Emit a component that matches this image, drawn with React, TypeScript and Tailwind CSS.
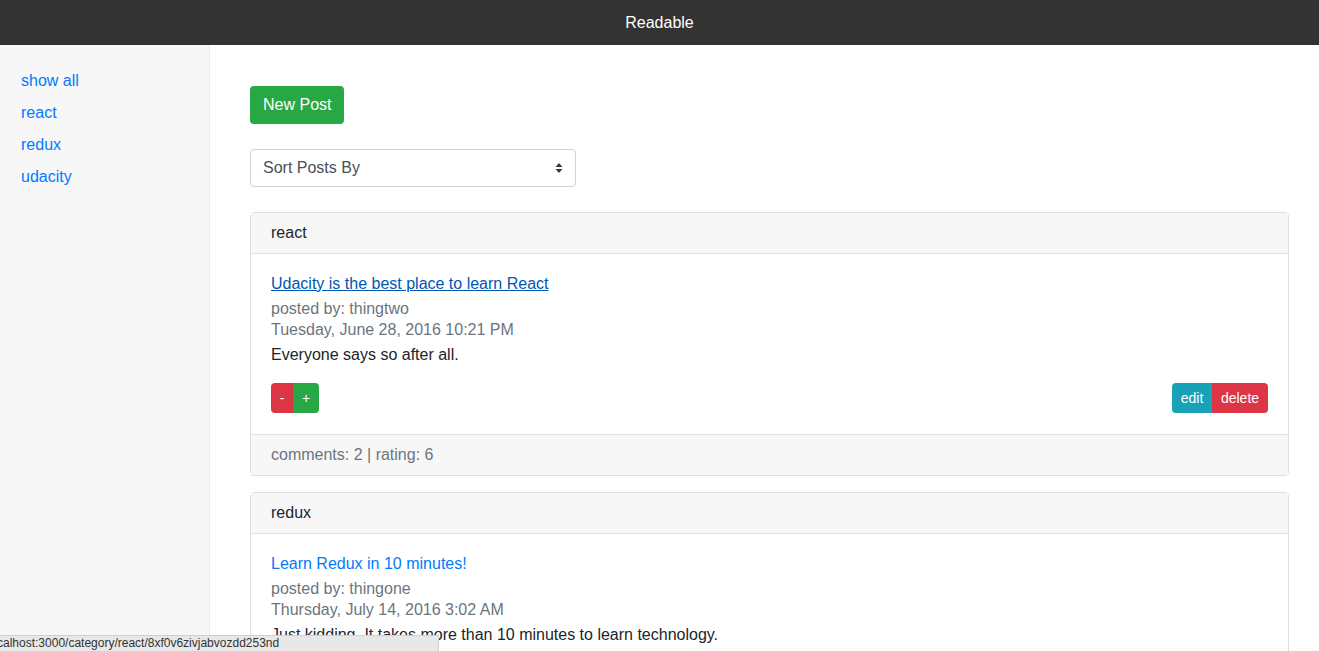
const categories = ['show all', 'react', 'redux', 'udacity']

const posts = [
  {
    category: 'react',
    title: 'Udacity is the best place to learn React',
    author: 'thingtwo',
    date: 'Tuesday, June 28, 2016 10:21 PM',
    body: 'Everyone says so after all.',
    comments: 2,
    rating: 6,
    hovered: true,
  },
  {
    category: 'redux',
    title: 'Learn Redux in 10 minutes!',
    author: 'thingone',
    date: 'Thursday, July 14, 2016 3:02 AM',
    body: 'Just kidding. It takes more than 10 minutes to learn technology.',
    comments: 0,
    rating: -5,
    hovered: false,
  },
]

function PostCard({ post }: { post: (typeof posts)[number] }) {
  return (
    <div className="mb-4 rounded-[4px] border border-[#dfdfdf] bg-white">
      <div className="border-b border-[#dfdfdf] bg-[#f7f7f7] px-5 py-2 leading-6 text-[#212529]">
        {post.category}
      </div>
      <div className="px-5 pt-[19px] pb-[21px]">
        <a
          href="#"
          className={
            post.hovered
              ? 'block leading-[21px] text-[#0056b3] underline mb-1'
              : 'block leading-[21px] text-[#007bff] mb-1'
          }
        >
          {post.title}
        </a>
        <div className="leading-[21px] text-[#6c757d]">posted by: {post.author}</div>
        <div className="leading-[21px] text-[#6c757d]">{post.date}</div>
        <p className="mt-1 leading-[21px] text-[#212529]">{post.body}</p>
        <div className="mt-[18px] flex items-center justify-between">
          <div className="flex">
            <button className="h-[30px] w-[22px] rounded-l-[4px] bg-[#dc3545] text-[14px] text-white">-</button>
            <button className="h-[30px] w-[26px] rounded-r-[4px] bg-[#28a745] text-[14px] text-white">+</button>
          </div>
          <div className="flex">
            <button className="h-[30px] w-[40px] rounded-l-[4px] bg-[#17a2b8] text-[14px] text-white">edit</button>
            <button className="h-[30px] w-[56px] rounded-r-[4px] bg-[#dc3545] text-[14px] text-white">delete</button>
          </div>
        </div>
      </div>
      <div className="border-t border-[#dfdfdf] bg-[#f7f7f7] px-5 py-2 leading-6 text-[#6c757d]">
        comments: {post.comments} | rating: {post.rating}
      </div>
    </div>
  )
}

export default function App() {
  return (
    <div className="flex h-screen flex-col overflow-hidden bg-white font-['Liberation_Sans',Arial,sans-serif] text-[16px]">
      {/* Top bar */}
      <header className="flex h-[45px] shrink-0 items-center justify-center bg-[#333333] text-white">
        Readable
      </header>

      <div className="flex flex-1">
        {/* Category sidebar */}
        <nav className="w-[210px] shrink-0 border-r border-[#ececec] bg-[#f7f7f7] pt-5 pl-[21px]">
          <ul>
            {categories.map(c => (
              <li key={c} className="leading-8">
                <a href="#" className="text-[#007bff]">{c}</a>
              </li>
            ))}
          </ul>
        </nav>

        {/* Main column */}
        <main className="flex-1 pt-[41px] pl-10 pr-[30px]">
          <button className="h-[38px] rounded-[4px] bg-[#28a745] px-[13px] text-white">New Post</button>

          <div className="mt-[25px] flex h-[38px] w-[326px] items-center justify-between rounded-[4px] border border-[#ced4da] bg-white pl-3 pr-[12px] text-[#495057]">
            <span>Sort Posts By</span>
            <svg width="8" height="12" viewBox="0 0 8 12" className="text-[#343a40]">
              <path d="M4 1 L7.5 5 H0.5 Z M4 11 L7.5 7 H0.5 Z" fill="currentColor" />
            </svg>
          </div>

          <div className="mt-[25px]">
            {posts.map(p => (
              <PostCard key={p.title} post={p} />
            ))}
          </div>
        </main>
      </div>

      {/* Browser status bubble */}
      <div className="absolute bottom-0 left-0 h-[16px] w-[439px] overflow-hidden whitespace-nowrap border-t border-r border-[#cfcfcf] bg-[#e8e8e8] text-[12px] leading-[15px] text-[#333]">
        <span className="-ml-[3px]">calhost:3000/category/react/8xf0v6zivjabvozdd253nd</span>
      </div>
    </div>
  )
}
